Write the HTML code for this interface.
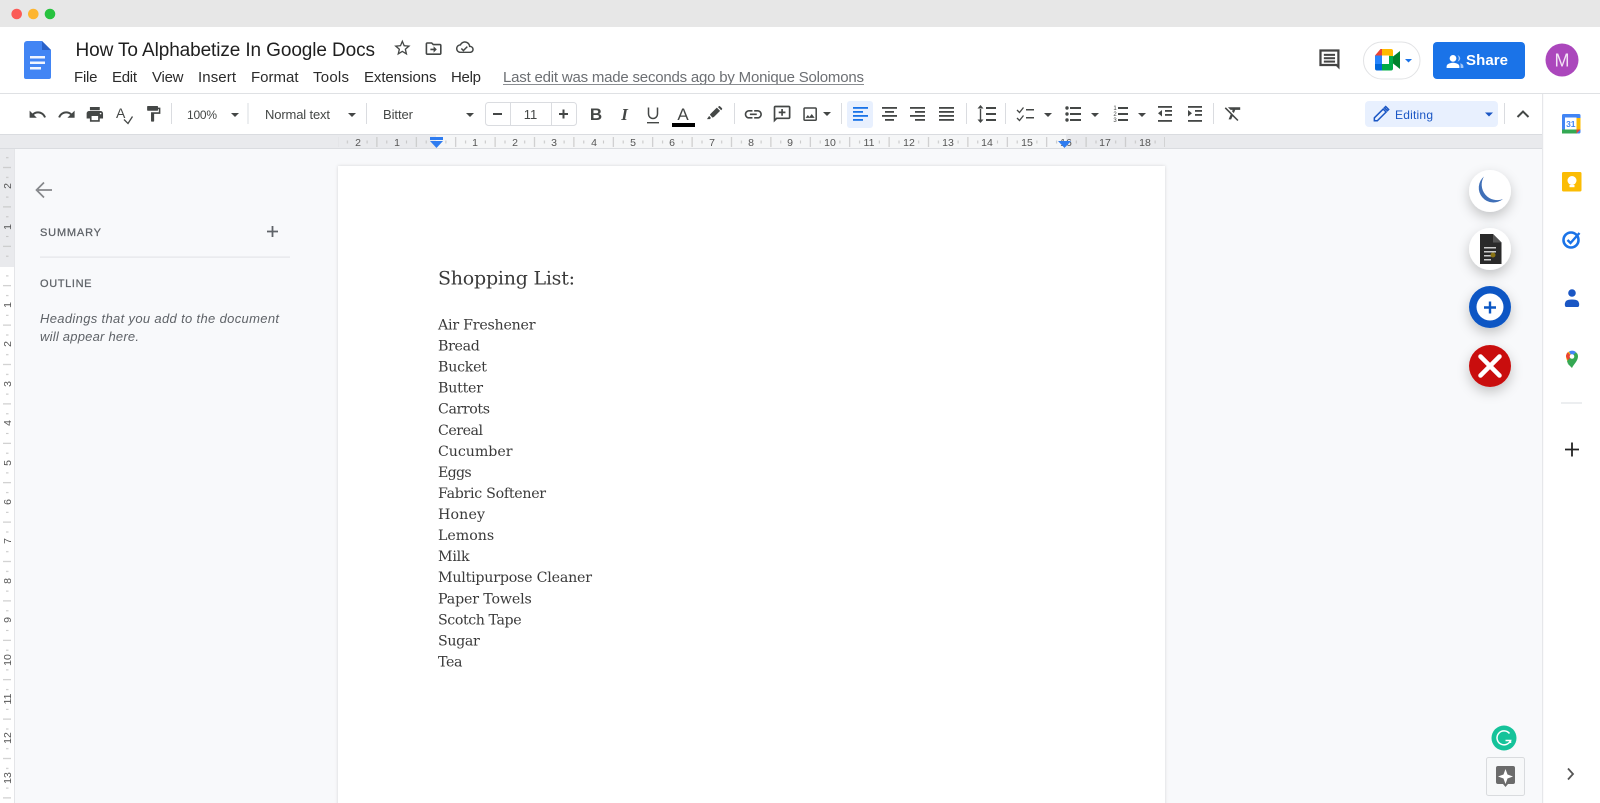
<!DOCTYPE html>
<html><head><meta charset="utf-8"><style>
html,body{margin:0;padding:0;width:1600px;height:803px;overflow:hidden;background:#fff}
svg{display:block;position:absolute;left:0;top:0}
text{font-family:"Liberation Sans",sans-serif}
.m{font-size:15px;fill:#2b2b2b}
.t{font-size:13px;fill:#444746}
.r{font-size:10.5px;fill:#555;text-anchor:middle}
.d{font-family:"DejaVu Serif","Liberation Serif",serif;font-size:14.2px;fill:#3a3a3a}
.i{fill:#444746}
.b{fill:#444746}
</style></head><body>
<svg width="1600" height="803" viewBox="0 0 1600 803" xmlns="http://www.w3.org/2000/svg">
<defs>
<filter id="sh" x="-50%" y="-50%" width="200%" height="220%"><feDropShadow dx="0" dy="5" stdDeviation="6" flood-color="#000" flood-opacity=".22"/></filter>
<filter id="ps" x="-2%" y="-2%" width="104%" height="104%"><feDropShadow dx="0" dy="0" stdDeviation="1.5" flood-color="#000" flood-opacity=".14"/></filter>
<pattern id="hp" x="436" y="137" width="39.4" height="10" patternUnits="userSpaceOnUse">
<rect x="19.2" y="0" width="1" height="10" fill="#c4c4c4"/><rect x="9.4" y="3.5" width="1" height="3" fill="#c4c4c4"/><rect x="29.1" y="3.5" width="1" height="3" fill="#c4c4c4"/>
</pattern>
<pattern id="vp" x="0" y="266" width="14" height="39.4" patternUnits="userSpaceOnUse">
<rect x="3" y="19.2" width="8" height="1" fill="#c4c4c4"/><rect x="6" y="9.4" width="2.500" height="1" fill="#c4c4c4"/><rect x="6" y="29.1" width="2.500" height="1" fill="#c4c4c4"/>
</pattern>
<path id="caret" d="M0 0h8l-4 4z" fill="#444746"/>
</defs>

<!-- backgrounds -->
<rect width="1600" height="803" fill="#fff"/>
<rect width="1600" height="27" fill="#e7e7e7"/>
<circle cx="16.7" cy="14" r="5.3" fill="#fb5b57"/><circle cx="33.3" cy="14" r="5.3" fill="#fdb52f"/><circle cx="50" cy="14" r="5.3" fill="#27c23f"/>
<rect x="0" y="93" width="1600" height="1" fill="#dfe1e4"/>
<rect x="0" y="149" width="1542" height="654" fill="#f8f9fb"/>
<rect x="1542" y="94" width="1.2" height="709" fill="#e6e7ea"/>

<!-- ruler h -->
<rect x="0" y="134" width="1542" height="15" fill="#e9eaed"/>
<rect x="436" y="135" width="630" height="13" fill="#f5f6f7"/>
<rect x="0" y="134" width="1542" height="1" fill="#dadce0"/><rect x="0" y="148" width="1542" height="1" fill="#dadce0"/>
<rect x="338" y="137" width="827" height="10" fill="url(#hp)"/>
<g class="rt"><text class="r" x="358" y="146">2</text><text class="r" x="397" y="146">1</text><text class="r" x="475" y="146">1</text><text class="r" x="515" y="146">2</text><text class="r" x="554" y="146">3</text><text class="r" x="594" y="146">4</text><text class="r" x="633" y="146">5</text><text class="r" x="672" y="146">6</text><text class="r" x="712" y="146">7</text><text class="r" x="751" y="146">8</text><text class="r" x="790" y="146">9</text><text class="r" x="830" y="146">10</text><text class="r" x="869" y="146">11</text><text class="r" x="909" y="146">12</text><text class="r" x="948" y="146">13</text><text class="r" x="987" y="146">14</text><text class="r" x="1027" y="146">15</text><text class="r" x="1066" y="146">16</text><text class="r" x="1105" y="146">17</text><text class="r" x="1145" y="146">18</text></g>
<path d="M430 137h13v3h-13z" fill="#2f7cf0"/><path d="M430 141h13l-6.5 7z" fill="#2f7cf0"/>
<path d="M1058 141h13l-6.5 7z" fill="#2f7cf0"/>

<!-- ruler v -->
<rect x="0" y="149" width="14" height="118" fill="#e9eaed"/><rect x="0" y="267" width="14" height="536" fill="#fff"/>
<rect x="14" y="149" width="1" height="654" fill="#e4e5e8"/>
<rect x="0" y="149" width="14" height="654" fill="url(#vp)"/>
<g>
<text class="r" transform="translate(11,186) rotate(-90)">2</text><text class="r" transform="translate(11,227) rotate(-90)">1</text>
<text class="r" transform="translate(11,305) rotate(-90)">1</text><text class="r" transform="translate(11,344) rotate(-90)">2</text><text class="r" transform="translate(11,384) rotate(-90)">3</text><text class="r" transform="translate(11,423) rotate(-90)">4</text><text class="r" transform="translate(11,463) rotate(-90)">5</text><text class="r" transform="translate(11,502) rotate(-90)">6</text><text class="r" transform="translate(11,541) rotate(-90)">7</text><text class="r" transform="translate(11,581) rotate(-90)">8</text><text class="r" transform="translate(11,620) rotate(-90)">9</text><text class="r" transform="translate(11,660) rotate(-90)">10</text><text class="r" transform="translate(11,699) rotate(-90)">11</text><text class="r" transform="translate(11,738) rotate(-90)">12</text><text class="r" transform="translate(11,778) rotate(-90)">13</text>
</g>

<!-- page -->
<rect x="338" y="166" width="827" height="660" fill="#fff" filter="url(#ps)"/>

<!-- docs logo -->
<path d="M27 41h15l9 9v27a2 2 0 0 1-2 2H26a2 2 0 0 1-2-2V44a3 3 0 0 1 3-3z" fill="#4285f4"/>
<path d="M42 41l9 9h-9z" fill="#2a62c9"/>
<rect x="30" y="56" width="15" height="2.500" fill="#f1f5fe"/><rect x="30" y="61.500" width="15" height="2.500" fill="#f1f5fe"/><rect x="30" y="67" width="11" height="2.500" fill="#f1f5fe"/>

<!-- title and menu -->
<text x="75.5" y="56" font-size="19" fill="#1f1f1f" textLength="299.5">How To Alphabetize In Google Docs</text>
<g transform="translate(392.500,38) scale(.82)"><path class="i" d="M22 9.24l-7.19-.62L12 2 9.19 8.63 2 9.24l5.46 4.73L5.82 21 12 17.27 18.18 21l-1.63-7.03L22 9.24zM12 15.4l-3.76 2.27 1-4.28-3.32-2.88 4.38-.38L12 6.1l1.71 4.04 4.38.38-3.32 2.88 1 4.28L12 15.4z"/></g>
<g transform="translate(424,39) scale(.8)"><path class="i" d="M20 6h-8l-2-2H4c-1.1 0-2 .9-2 2v12c0 1.1.9 2 2 2h16c1.1 0 2-.9 2-2V8c0-1.1-.9-2-2-2zm0 12H4V6h5.17l2 2H20v10zm-8-1l4-4-4-4v3H8v2h4v3z"/></g>
<g transform="translate(456,39) scale(.74)"><path class="i" d="M19.35 10.04C18.67 6.59 15.64 4 12 4 9.11 4 6.6 5.64 5.35 8.04 2.34 8.36 0 10.91 0 14c0 3.31 2.69 6 6 6h13c2.76 0 5-2.24 5-5 0-2.64-2.05-4.78-4.65-4.96zM19 18H6c-2.21 0-4-1.79-4-4s1.79-4 4-4h.71C7.37 7.69 9.48 6 12 6c3.04 0 5.5 2.46 5.5 5.5v.5H19c1.66 0 3 1.34 3 3s-1.34 3-3 3zM10 15.2l-2.1-2.1-1.4 1.4 3.5 3.5 6-6-1.4-1.4z" transform="translate(0,-1)"/></g>
<text class="m" x="74" y="82" textLength="23.5">File</text>
<text class="m" x="112" y="82" textLength="25">Edit</text>
<text class="m" x="152" y="82" textLength="31.5">View</text>
<text class="m" x="198" y="82" textLength="38">Insert</text>
<text class="m" x="251" y="82" textLength="47.5">Format</text>
<text class="m" x="313" y="82" textLength="36">Tools</text>
<text class="m" x="364" y="82" textLength="72.5">Extensions</text>
<text class="m" x="451" y="82" textLength="30">Help</text>
<text x="503" y="82" font-size="15" fill="#6c6f73" textLength="361">Last edit was made seconds ago by Monique Solomons</text>
<rect x="503" y="84" width="361" height="1" fill="#8a8d91"/>

<!-- header right -->
<g transform="translate(1316,46) scale(1.12)"><path d="M21 3H3v15h15l3 3z" fill="#444" /><path d="M19 5H5v11h13.6l.4.4z" fill="#fff"/><rect x="7" y="7" width="10" height="1.8" fill="#444"/><rect x="7" y="10" width="10" height="1.8" fill="#444"/><rect x="7" y="13" width="10" height="1.8" fill="#444"/></g>
<rect x="1363.5" y="42" width="56.5" height="37" rx="18.5" fill="#fff" stroke="#e2e3e5"/>
<g>
<path d="M1382 49h-1.500l-5.500 6.500h7z" fill="#ea4335"/>
<path d="M1375 55.500h7v8.500h-7z" fill="#2684fc"/>
<path d="M1375 64h7v6.500h-5a2 2 0 0 1-2-2z" fill="#0066da"/>
<path d="M1382 49h9a2 2 0 0 1 2 2v5h-4v-.5h-7z" fill="#ffba00"/>
<path d="M1382 64h7v-.5h4v5a2 2 0 0 1-2 2h-9z" fill="#00ac47"/>
<path d="M1389 60l4-3.500 7-5.500v18l-7-5.500z" fill="#00832d"/>
<path d="M1389 56h4v7.500h-4z" fill="#00ac47"/>
<rect x="1382" y="55.500" width="7" height="8.500" fill="#fff"/>
<path d="M1405 59h7l-3.500 3.500z" fill="#1a73e8"/>
</g>
<rect x="1433" y="42" width="92" height="37" rx="4" fill="#1a73e8"/>
<g transform="translate(1445,52) scale(.8)" fill="#fff"><circle cx="10" cy="8" r="4.200"/><path d="M2 20v-2c0-3 5-4.500 8-4.500s8 1.500 8 4.500v2z"/><path d="M15.500 4c2 .3 3.500 2 3.500 4s-1.500 3.700-3.500 4c1-1 1.700-2.400 1.700-4s-.7-3-1.700-4zM19 14c2 .6 4 1.700 4 4v2h-3.500v-2c0-1.700-.2-3-.5-4z" opacity=".6"/></g>
<text x="1466" y="65" font-size="15" font-weight="700" fill="#fff" textLength="42">Share</text>
<circle cx="1562" cy="60" r="16.500" fill="#ab47bc"/>
<text x="1562" y="66.500" font-size="18" fill="#fff" fill-opacity=".85" text-anchor="middle">M</text>

<!-- toolbar left -->
<g transform="translate(28,105) scale(.8)"><path class="i" d="M12.500 8c-2.650 0-5.050.99-6.900 2.600L2 7v9h9l-3.620-3.620c1.390-1.160 3.160-1.880 5.120-1.880 3.540 0 6.550 2.310 7.600 5.500l2.370-.78C21.080 11.030 17.150 8 12.500 8z"/></g>
<g transform="translate(57,105) scale(.8)"><path class="i" d="M18.400 10.600C16.550 8.990 14.150 8 11.500 8c-4.650 0-8.580 3.030-9.960 7.220L3.900 16c1.050-3.190 4.050-5.500 7.600-5.500 1.950 0 3.730.72 5.120 1.880L13 16h9V7l-3.600 3.600z"/></g>
<g transform="translate(85,104.500) scale(.82)"><path class="i" d="M19 8H5c-1.660 0-3 1.340-3 3v6h4v4h12v-4h4v-6c0-1.660-1.340-3-3-3zm-3 11H8v-5h8v5zm3-7c-.55 0-1-.45-1-1s.45-1 1-1 1 .45 1 1-.45 1-1 1zm-1-9H6v4h12V3z"/></g>
<text x="116" y="118" font-size="14" fill="#444746">A</text>
<path d="M124 119.500l4 4 4.500-7" fill="none" stroke="#444746" stroke-width="1.300"/>
<g transform="translate(144,104.500) scale(.78)"><path class="i" d="M18 4V3c0-.55-.45-1-1-1H5c-.55 0-1 .45-1 1v4c0 .55.45 1 1 1h12c.55 0 1-.45 1-1V6h1v4H9v11c0 .55.45 1 1 1h2c.55 0 1-.45 1-1v-9h8V4h-3z"/></g>
<rect x="171" y="103" width="1" height="21" fill="#dadce0"/>
<text x="187" y="119" font-size="12" fill="#444746" textLength="30">100%</text><use href="#caret" x="231" y="113"/>
<rect x="247.500" y="103" width="1" height="21" fill="#dadce0"/>
<text class="t" x="265" y="119" textLength="65">Normal text</text><use href="#caret" x="348" y="113"/>
<rect x="366" y="103" width="1" height="21" fill="#dadce0"/>
<text class="t" x="383" y="119" textLength="30">Bitter</text><use href="#caret" x="466" y="113"/>
<rect x="485.500" y="102.500" width="91" height="23" rx="3" fill="#fff" stroke="#dadce0"/>
<rect x="510" y="103" width="1" height="22" fill="#dadce0"/><rect x="551" y="103" width="1" height="22" fill="#dadce0"/>
<rect x="493" y="113" width="9" height="2" fill="#444746"/>
<text x="530.500" y="119" font-size="13" fill="#444746" text-anchor="middle">11</text>
<path d="M559 114h9M563.500 109.500v9" stroke="#444746" stroke-width="2" fill="none"/>

<!-- format -->
<text x="596" y="120" font-size="17" font-weight="700" fill="#444746" text-anchor="middle">B</text>
<text x="624.500" y="120" font-size="17" font-style="italic" fill="#444746" text-anchor="middle" style="font-family:'Liberation Serif',serif;font-weight:700">I</text>
<path d="M648.500 107.500v6.500a4.500 4.500 0 0 0 9 0v-6.500" fill="none" stroke="#444746" stroke-width="1.500"/><rect x="647" y="122" width="12" height="1.400" fill="#444746"/>
<text x="683" y="120" font-size="17" fill="#444746" text-anchor="middle">A</text><rect x="672" y="123" width="23" height="4" fill="#000"/>
<g transform="translate(705.500,104.500) scale(.73)"><path class="i" d="M2 20h4l1.500-1.500-2.500-3zM6 14l3.500 4 2-.8 8.500-8.500-4.500-4.500-8.500 8.500zM17 3.500l4.500 4.300 1-1c.5-.5.5-1.300 0-1.800l-2.500-2.500c-.5-.5-1.300-.5-1.800 0z"/></g>
<rect x="734" y="103" width="1" height="21" fill="#dadce0"/>
<g transform="translate(743,104) scale(.86)"><path class="i" d="M3.900 12c0-1.710 1.390-3.100 3.100-3.100h4V7H7c-2.760 0-5 2.240-5 5s2.240 5 5 5h4v-1.900H7c-1.710 0-3.100-1.390-3.100-3.100zM8 13h8v-2H8v2zm9-6h-4v1.900h4c1.710 0 3.100 1.390 3.100 3.100s-1.390 3.100-3.100 3.100h-4V17h4c2.760 0 5-2.240 5-5s-2.240-5-5-5z"/></g>
<g transform="translate(772,104) scale(.84)"><path class="i" d="M20 2H4c-1.100 0-2 .9-2 2v18l4-4h14c1.100 0 2-.9 2-2V4c0-1.100-.9-2-2-2zm0 14H5.200L4 17.200V4h16v12zM11 14h2v-3h3V9h-3V6h-2v3H8v2h3z"/></g>
<g transform="translate(801,105) scale(.76)"><path class="i" d="M19 5v14H5V5h14m0-2H5c-1.100 0-2 .9-2 2v14c0 1.100.9 2 2 2h14c1.100 0 2-.9 2-2V5c0-1.100-.9-2-2-2zm-4.860 8.860l-3 3.870L9 13.140 6 17h12z"/></g>
<use href="#caret" x="823" y="112"/>
<rect x="841" y="103" width="1" height="21" fill="#dadce0"/>
<rect x="847" y="101" width="26" height="27" rx="3" fill="#e8f0fe"/>
<g fill="#1a73e8"><rect x="853" y="107" width="15" height="1.800"/><rect x="853" y="111" width="10" height="1.800"/><rect x="853" y="115" width="15" height="1.800"/><rect x="853" y="119" width="10" height="1.800"/></g>
<g class="b"><rect x="882" y="107" width="15" height="1.800"/><rect x="885" y="111" width="9" height="1.800"/><rect x="882" y="115" width="15" height="1.800"/><rect x="885" y="119" width="9" height="1.800"/>
<rect x="910" y="107" width="15" height="1.800"/><rect x="915" y="111" width="10" height="1.800"/><rect x="910" y="115" width="15" height="1.800"/><rect x="915" y="119" width="10" height="1.800"/>
<rect x="939" y="107" width="15" height="1.800"/><rect x="939" y="111" width="15" height="1.800"/><rect x="939" y="115" width="15" height="1.800"/><rect x="939" y="119" width="15" height="1.800"/></g>
<rect x="966" y="103" width="1" height="21" fill="#dadce0"/>
<g class="b"><path d="M977.500 108.500h6l-3-3.500zM977.500 119.500h6l-3 3.500zM979.800 108h1.400v12h-1.400z"/><rect x="986" y="107" width="10" height="2"/><rect x="986" y="113" width="10" height="2"/><rect x="986" y="119" width="10" height="2"/></g>
<rect x="1005" y="103" width="1" height="21" fill="#dadce0"/>
<g fill="none" stroke="#444746" stroke-width="1.300"><path d="M1017 110l2.500 2.500 4-5M1017 118l2.500 2.500 4-5"/></g><g class="b"><rect x="1026" y="109" width="8" height="1.500"/><rect x="1026" y="117" width="8" height="1.500"/></g>
<use href="#caret" x="1044" y="113"/>
<g class="b"><circle cx="1067" cy="108" r="1.700"/><circle cx="1067" cy="114" r="1.700"/><circle cx="1067" cy="120" r="1.700"/><rect x="1070" y="107" width="11" height="2"/><rect x="1070" y="113" width="11" height="2"/><rect x="1070" y="119" width="11" height="2"/></g>
<use href="#caret" x="1091" y="113"/>
<g class="b"><text x="1115" y="110" font-size="6" fill="#444746" text-anchor="middle">1</text><text x="1115" y="116" font-size="6" fill="#444746" text-anchor="middle">2</text><text x="1115" y="122" font-size="6" fill="#444746" text-anchor="middle">3</text><rect x="1118" y="107" width="10" height="2"/><rect x="1118" y="113" width="10" height="2"/><rect x="1118" y="119" width="10" height="2"/></g>
<use href="#caret" x="1138" y="113"/>
<g class="b"><rect x="1158" y="106" width="14" height="1.800"/><rect x="1165" y="110" width="7" height="1.800"/><rect x="1165" y="114" width="7" height="1.800"/><rect x="1158" y="120" width="14" height="1.800"/><path d="M1162 110v6.500l-4-3.200z"/>
<rect x="1188" y="106" width="14" height="1.800"/><rect x="1195" y="110" width="7" height="1.800"/><rect x="1195" y="114" width="7" height="1.800"/><rect x="1188" y="120" width="14" height="1.800"/><path d="M1188 110v6.500l4-3.200z"/></g>
<rect x="1213" y="103" width="1" height="21" fill="#dadce0"/>
<g transform="translate(1223,103) scale(.86)"><path class="i" d="M3.270 5L2 6.270l6.970 6.970L6.500 19h3l1.570-3.660L16.730 21 18 19.730 3.550 5.270 3.270 5zM6 5v.18L8.820 8h2.400l-.72 1.680 2.100 2.100L14.210 8H20V5H6z"/></g>

<!-- editing -->
<rect x="1365" y="101" width="133" height="26" rx="4" fill="#e8f0fe"/>
<g transform="translate(1371,104) scale(.84)"><path fill="none" stroke="#1a56c4" stroke-width="1.800" d="M4 16.500V20h3.500L18 9.500 14.500 6zM16 4.500l3.500 3.500 1.500-1.500L17.500 3z"/></g>
<text x="1395" y="119" font-size="12" fill="#1a56c4" textLength="38">Editing</text>
<path d="M1485 112.500h8l-4 4z" fill="#1a56c4"/>
<rect x="1504" y="103" width="1" height="21" fill="#dadce0"/>
<path d="M1517.500 117l5.500-5.500 5.500 5.500" fill="none" stroke="#444746" stroke-width="2"/>

<!-- outline -->
<path d="M52 190H38M44 182.500l-7.500 7.500 7.500 7.500" fill="none" stroke="#85878b" stroke-width="1.700"/>
<text x="40" y="236" font-size="11" fill="#5f6368" stroke="#5f6368" stroke-width=".25" textLength="61">SUMMARY</text>
<path d="M267 231.500h11M272.500 226v11" stroke="#5f6368" stroke-width="1.800" fill="none"/>
<rect x="40" y="256.500" width="250" height="1.200" fill="#e3e5e8"/>
<text x="40" y="287" font-size="11" fill="#5f6368" stroke="#5f6368" stroke-width=".25" textLength="51.500">OUTLINE</text>
<text x="40" y="323" font-size="13" font-style="italic" fill="#5f6368" textLength="239">Headings that you add to the document</text>
<text x="40" y="341" font-size="13" font-style="italic" fill="#5f6368" textLength="99">will appear here.</text>

<!-- doc text -->
<text x="438" y="284.500" class="d" style="font-size:19px" textLength="137">Shopping List:</text>
<text class="d" x="438" y="329.500" textLength="97.500">Air Freshener</text>
<text class="d" x="438" y="350.600" textLength="41.800">Bread</text>
<text class="d" x="438" y="371.600" textLength="49">Bucket</text>
<text class="d" x="438" y="392.700" textLength="45">Butter</text>
<text class="d" x="438" y="413.700" textLength="52">Carrots</text>
<text class="d" x="438" y="434.800" textLength="45">Cereal</text>
<text class="d" x="438" y="455.900" textLength="74.500">Cucumber</text>
<text class="d" x="438" y="476.900" textLength="33.700">Eggs</text>
<text class="d" x="438" y="498" textLength="108.100">Fabric Softener</text>
<text class="d" x="438" y="519" textLength="47">Honey</text>
<text class="d" x="438" y="540.100" textLength="56.100">Lemons</text>
<text class="d" x="438" y="561.200" textLength="31.600">Milk</text>
<text class="d" x="438" y="582.200" textLength="154">Multipurpose Cleaner</text>
<text class="d" x="438" y="603.300" textLength="93.800">Paper Towels</text>
<text class="d" x="438" y="624.300" textLength="83.600">Scotch Tape</text>
<text class="d" x="438" y="645.400" textLength="41.800">Sugar</text>
<text class="d" x="438" y="666.400" textLength="24.500">Tea</text>

<!-- FABs -->
<circle cx="1490" cy="191" r="21" fill="#fff" filter="url(#sh)"/>
<path d="M1484 176.500A14.500 14.500 0 1 0 1503 199A15.500 15.500 0 0 1 1484 176.500z" fill="#4070b8"/>
<circle cx="1490" cy="249" r="21" fill="#fff" filter="url(#sh)"/>
<path d="M1480 234h13l8.500 8.500V264h-21.500z" fill="#2a2a2a"/><path d="M1493 234l8.500 8.500h-8.500z" fill="#555"/>
<g fill="#ccc"><rect x="1484" y="247" width="12" height="1.500"/><rect x="1484" y="251" width="12" height="1.500"/><rect x="1484" y="255" width="7" height="1.500"/><rect x="1484" y="259" width="7" height="1.500"/></g><circle cx="1493" cy="255" r="2.500" fill="#8a7414"/>
<circle cx="1490" cy="307" r="21" fill="#0b57c4" filter="url(#sh)"/>
<circle cx="1490" cy="307" r="13.500" fill="#fff"/>
<path d="M1484 307.500h12M1490 301.500v12" stroke="#0b57c4" stroke-width="2.400" fill="none"/>
<circle cx="1490" cy="366" r="21" fill="#c90f0f" filter="url(#sh)"/>
<path d="M1480.500 356.500l19 19M1499.500 356.500l-19 19" stroke="#fff" stroke-width="4.500" stroke-linecap="round"/>

<!-- Grammarly + explore -->
<circle cx="1504" cy="738" r="12.500" fill="#15c39a"/>
<path d="M1509.500 733.500a7 7 0 1 0 1 7h-5" fill="none" stroke="#fff" stroke-width="1.500"/><path d="M1510.500 740v3" stroke="#fff" stroke-width="1.500"/>
<rect x="1486.500" y="757.500" width="38" height="38" rx="2" fill="#f7f8f9" stroke="#d9dbde"/>
<path d="M1498 766h15a2 2 0 0 1 2 2v14a2 2 0 0 1-2 2h-5l-2.500 3-2.500-3h-5a2 2 0 0 1-2-2v-14a2 2 0 0 1 2-2z" fill="#6b6b6b"/>
<path d="M1505.500 769l2 5.500 5.500 2-5.500 2-2 5.500-2-5.500-5.500-2 5.500-2z" fill="#fff"/>

<!-- side panel -->
<g transform="translate(1562,114)">
<rect x="0" y="0" width="18.500" height="19.500" rx="1.500" fill="#4285f4"/>
<rect x="14.500" y="4" width="4" height="11.500" fill="#fbbc04"/>
<rect x="0" y="15.500" width="15" height="4" fill="#34a853"/>
<path d="M14.500 15.500h4l-4 4z" fill="#ea4335"/>
<rect x="3" y="3.500" width="11.500" height="12" fill="#fff"/>
<text x="8.800" y="13" font-size="8.500" font-weight="700" fill="#4285f4" text-anchor="middle">31</text>
</g>
<rect x="1562" y="172" width="19.500" height="19.500" rx="1.500" fill="#fbbc04"/>
<circle cx="1572" cy="180.500" r="4.500" fill="#fff"/><rect x="1569.500" y="185" width="5" height="2.200" fill="#fff"/>
<circle cx="1571" cy="240" r="7.500" fill="none" stroke="#1a73e8" stroke-width="2.600"/>
<path d="M1567.500 240l3 3 9-10" fill="none" stroke="#1a73e8" stroke-width="2.400"/>
<circle cx="1572" cy="293" r="3.800" fill="#1a56c4"/><path d="M1565 306a6 6 0 0 1 1-5c1-1 3-1.500 6-1.500s5 .5 6 1.500a6 6 0 0 1 1 5c-.5 1-1 1-2 1h-10c-1 0-1.500 0-2-1z" fill="#1a56c4"/>
<g transform="translate(1572,357)">
<path d="M0 11c-2-4-6-7-6-11.500a6 6 0 0 1 3-5l4.500 5z" fill="#fbbc04"/>
<path d="M0 11c1-3 6-7 6-11.500 0-1-.3-2-.7-3L-4 7z" fill="#34a853"/>
<path d="M-3-5.500a6 6 0 0 1 3-.9c1.600 0 3 .6 4 1.600L0 0z" fill="#4285f4"/>
<path d="M-6-.5a6 6 0 0 1 1.800-4.300L0 0l-4 4z" fill="#ea4335"/>
<path d="M4-4.800a6 6 0 0 1 1.300 1.800L-4 7l-1-3z" fill="#34a853"/>
<circle cx="0" cy="-.5" r="2.300" fill="#fff"/>
</g>
<rect x="1561" y="402.500" width="21" height="1" fill="#dadce0"/>
<path d="M1565 449.500h14M1572 442.500v14" stroke="#222" stroke-width="1.800" fill="none"/>
<path d="M1568 768.500l5 5.500-5 5.500" fill="none" stroke="#555" stroke-width="1.800"/>
</svg>
</body></html>
